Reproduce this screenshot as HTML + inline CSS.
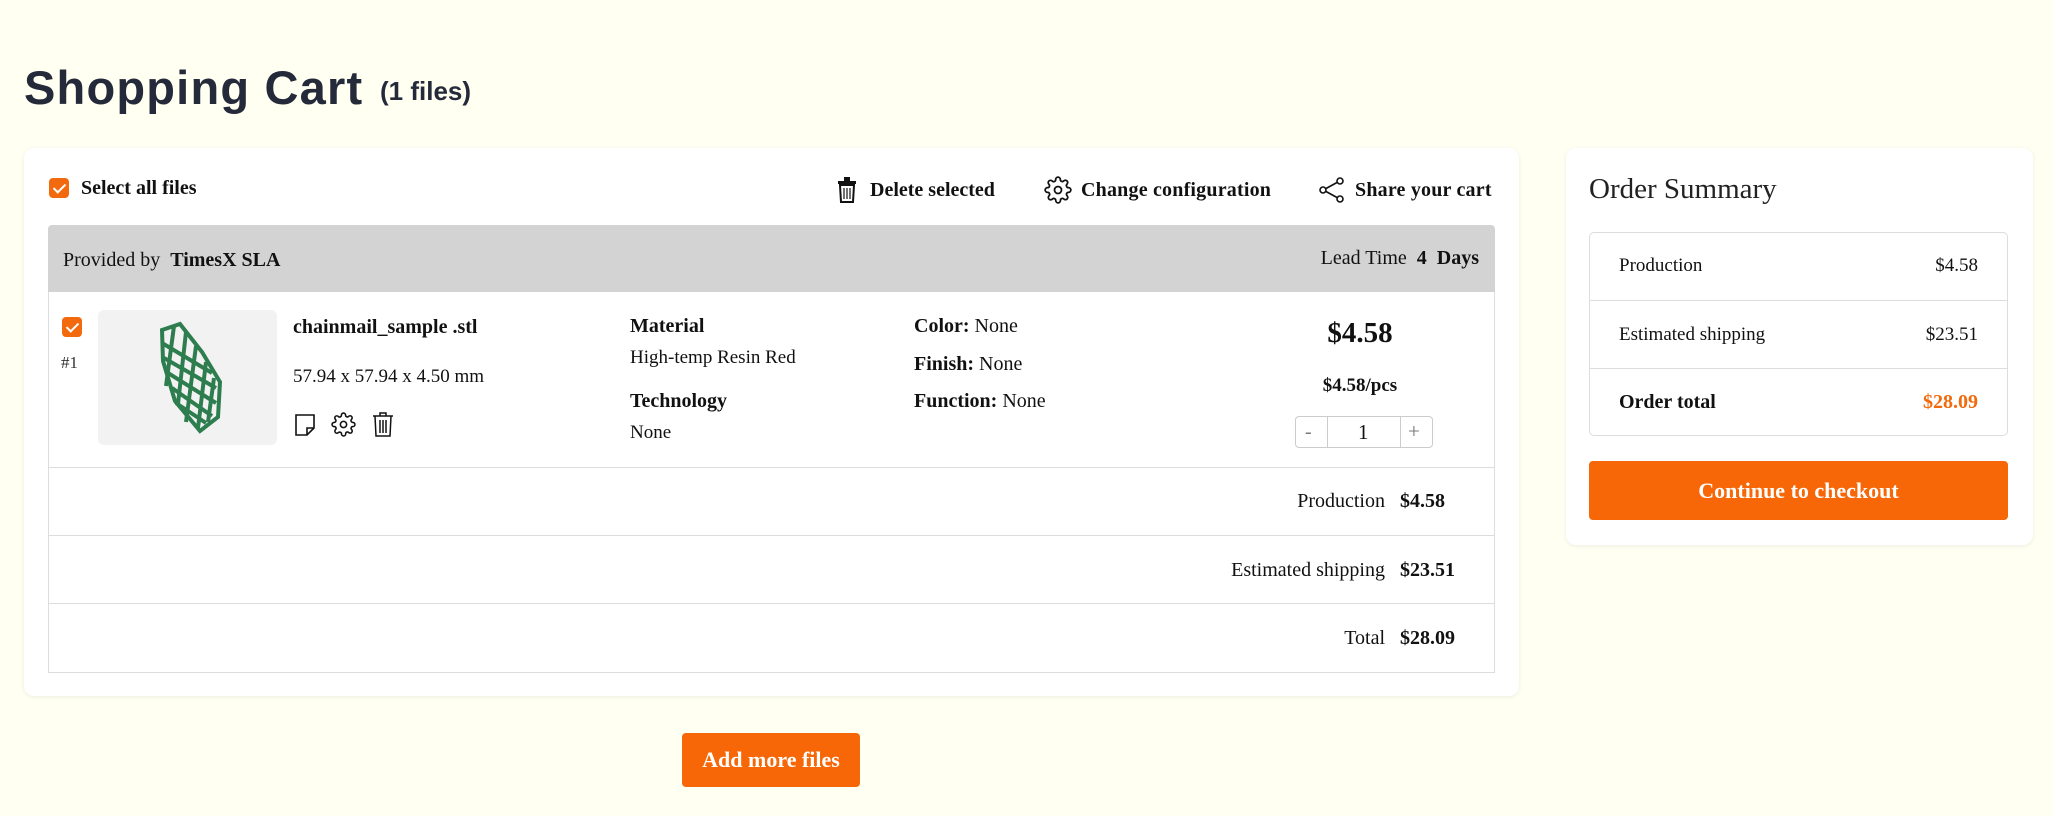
<!DOCTYPE html>
<html><head><meta charset="utf-8"><style>
*{box-sizing:border-box;margin:0;padding:0}
body{width:2053px;height:816px;background:#fffff2;font-family:"Liberation Serif",serif;color:#111;position:relative;overflow:hidden}
.a{position:absolute;white-space:nowrap}
.b{font-weight:bold}
.card{position:absolute;background:#fff;border-radius:10px;box-shadow:0 1px 4px rgba(0,0,0,.08)}
.cb{position:absolute;width:20px;height:20px;background:#f26a0d;border-radius:4px}
.cb:after{content:"";position:absolute;left:7px;top:3px;width:5px;height:10px;border:solid #fff;border-width:0 2.5px 2.5px 0;transform:rotate(45deg)}
.f21{font-size:20px}
.line{position:absolute;height:1px;background:#ddd}
</style></head><body>
<div class="a" style="left:24px;top:60px;font-family:'Liberation Sans',sans-serif;font-weight:bold;font-size:47px;color:#252a3a;letter-spacing:1.2px">Shopping Cart</div>
<div class="a" style="left:380px;top:76px;font-family:'Liberation Sans',sans-serif;font-weight:bold;font-size:26px;color:#252a3a">(1 files)</div>

<div class="card" style="left:24px;top:148px;width:1495px;height:548px"></div>
<div class="cb" style="left:49px;top:178px"></div>
<div class="a b f21" style="left:81px;top:177px">Select all files</div>
<svg class="a" style="left:836px;top:176px" width="22" height="28" viewBox="0 0 22 28"><rect x="2" y="5" width="18" height="3" fill="#111"/><rect x="8" y="1" width="6" height="4" fill="#111"/><path d="M4 9h14l-1 17H5z" fill="none" stroke="#111" stroke-width="2"/><path d="M8 12v11M11 12v11M14 12v11" stroke="#111" stroke-width="1.2"/></svg>
<div class="a b f21" style="left:870px;top:179px">Delete selected</div>
<svg class="a" style="left:1044px;top:176px" width="28" height="28" viewBox="0 0 24 24" fill="none" stroke="#111" stroke-width="1.5"><circle cx="12" cy="12" r="3"/><path d="M19.4 15a1.65 1.65 0 0 0 .33 1.82l.06.06a2 2 0 1 1-2.830 2.83l-.06-.06a1.65 1.65 0 0 0-1.82-.33 1.65 1.65 0 0 0-1 1.51V21a2 2 0 0 1-4 0v-.09A1.65 1.65 0 0 0 9 19.4a1.65 1.65 0 0 0-1.82.33l-.06.06a2 2 0 1 1-2.83-2.83l.06-.06A1.65 1.65 0 0 0 4.68 15a1.65 1.65 0 0 0-1.51-1H3a2 2 0 0 1 0-4h.09A1.65 1.65 0 0 0 4.6 9a1.65 1.65 0 0 0-.33-1.82l-.06-.06a2 2 0 1 1 2.83-2.83l.06.06A1.65 1.65 0 0 0 9 4.68a1.65 1.65 0 0 0 1-1.51V3a2 2 0 0 1 4 0v.09a1.65 1.650 0 0 0 1 1.51 1.65 1.65 0 0 0 1.82-.33l.06-.06a2 2 0 1 1 2.83 2.83l-.06.06A1.65 1.65 0 0 0 19.4 9a1.65 1.65 0 0 0 1.51 1H21a2 2 0 0 1 0 4h-.09a1.65 1.65 0 0 0-1.51 1z"/></svg>
<div class="a b f21" style="left:1081px;top:179px;letter-spacing:0.2px">Change configuration</div>
<svg class="a" style="left:1318px;top:176px" width="28" height="28" viewBox="0 0 28 28" fill="none" stroke="#111" stroke-width="1.6"><circle cx="22" cy="5" r="3"/><circle cx="5" cy="14" r="3"/><circle cx="22" cy="23" r="3"/><path d="M8 12.5l11-6M8 15.5l11 6"/></svg>
<div class="a b f21" style="left:1355px;top:179px;letter-spacing:0.2px">Share your cart</div>

<div class="a" style="left:48px;top:292px;width:1447px;height:381px;border:1px solid #ddd;border-top:none"></div>
<div class="a" style="left:48px;top:225px;width:1447px;height:67px;background:#d3d3d3;border-radius:4px 4px 0 0"></div>
<div class="a f21" style="left:63px;top:249px">Provided by &nbsp;<b>TimesX SLA</b></div>
<div class="a f21" style="right:574px;top:247px">Lead Time &nbsp;<b>4 &nbsp;Days</b></div>

<div class="cb" style="left:62px;top:317px"></div>
<div class="a" style="left:61px;top:353px;font-size:17px;color:#333">#1</div>
<div class="a" style="left:98px;top:310px;width:179px;height:135px;background:#f2f2f2;border-radius:6px"></div>
<svg class="a" style="left:150px;top:318px" width="80" height="120" viewBox="0 0 80 120"><g fill="none" stroke="#2e7d4f" stroke-width="4"><path d="M12 12l18 -6 22 28 18 30 -2 35 -18 14 -25 -30 -12 -40z"/><path d="M12 25l50 30M14 40l52 30M18 55l48 30M22 70l40 28M26 85l30 20M24 8l-8 60M36 14l-8 72M46 28l-10 76M56 44l-8 66M64 60l-6 44"/></g></svg>
<div class="a b f21" style="left:293px;top:316px">chainmail_sample .stl</div>
<div class="a" style="left:293px;top:366px;font-size:19px">57.94 x 57.94 x 4.50 mm</div>
<svg class="a" style="left:294px;top:413px" width="22" height="24" viewBox="0 0 22 24" fill="none" stroke="#111" stroke-width="1.6"><path d="M2 2h18v13l-7 7H2z M13 22v-7h7"/></svg>
<svg class="a" style="left:331px;top:412px" width="25" height="25" viewBox="0 0 24 24" fill="none" stroke="#111" stroke-width="1.5"><circle cx="12" cy="12" r="3"/><path d="M19.4 15a1.65 1.65 0 0 0 .33 1.82l.06.06a2 2 0 1 1-2.83 2.83l-.06-.06a1.65 1.65 0 0 0-1.82-.33 1.65 1.65 0 0 0-1 1.51V21a2 2 0 0 1-4 0v-.09A1.65 1.65 0 0 0 9 19.4a1.65 1.65 0 0 0-1.82.33l-.06.06a2 2 0 1 1-2.83-2.83l.06-.06A1.65 1.65 0 0 0 4.68 15a1.65 1.65 0 0 0-1.51-1H3a2 2 0 0 1 0-4h.09A1.65 1.65 0 0 0 4.6 9a1.65 1.65 0 0 0-.33-1.82l-.06-.06a2 2 0 1 1 2.83-2.83l.06.06A1.65 1.65 0 0 0 9 4.68a1.65 1.65 0 0 0 1-1.51V3a2 2 0 0 1 4 0v.09a1.65 1.65 0 0 0 1 1.51 1.65 1.65 0 0 0 1.82-.33l.06-.06a2 2 0 1 1 2.83 2.83l-.06.06A1.65 1.65 0 0 0 19.4 9a1.65 1.65 0 0 0 1.51 1H21a2 2 0 0 1 0 4h-.09a1.65 1.65 0 0 0-1.51 1z"/></svg>
<svg class="a" style="left:372px;top:411px" width="22" height="27" viewBox="0 0 22 27" fill="none" stroke="#111" stroke-width="1.5"><path d="M1 5h20M8 5V2h6v3M3 5l1 20h14l1-20M8 9v13M11 9v13M14 9v13"/></svg>

<div class="a b f21" style="left:630px;top:315px">Material</div>
<div class="a" style="left:630px;top:347px;font-size:19px">High-temp Resin Red</div>
<div class="a b f21" style="left:630px;top:390px">Technology</div>
<div class="a" style="left:630px;top:422px;font-size:19px">None</div>
<div class="a f21" style="left:914px;top:315px"><b>Color:</b> None</div>
<div class="a f21" style="left:914px;top:353px"><b>Finish:</b> None</div>
<div class="a f21" style="left:914px;top:390px"><b>Function:</b> None</div>

<div class="a b" style="left:1310px;top:317px;width:100px;text-align:center;font-size:29px">$4.58</div>
<div class="a b" style="left:1300px;top:375px;width:120px;text-align:center;font-size:19px">$4.58/pcs</div>
<div class="a" style="left:1295px;top:416px;width:138px;height:32px;border:1px solid #ccc;border-radius:4px;background:#fff"></div>
<div class="a" style="left:1327px;top:417px;width:1px;height:30px;background:#ccc"></div>
<div class="a" style="left:1400px;top:417px;width:1px;height:30px;background:#ccc"></div>
<div class="a" style="left:1305px;top:421px;font-size:20px;color:#777">-</div>
<div class="a" style="left:1358px;top:420px;font-size:21px">1</div>
<div class="a" style="left:1408px;top:419px;font-size:21px;color:#777">+</div>

<div class="line" style="left:48px;top:467px;width:1447px"></div>
<div class="line" style="left:48px;top:535px;width:1447px"></div>
<div class="line" style="left:48px;top:603px;width:1447px"></div>
<div class="a f21" style="right:608px;top:490px">Production &nbsp;&nbsp;<b>$4.58</b></div>
<div class="a f21" style="right:598px;top:559px">Estimated shipping &nbsp;&nbsp;<b>$23.51</b></div>
<div class="a f21" style="right:598px;top:627px">Total &nbsp;&nbsp;<b>$28.09</b></div>

<div class="a b" style="left:682px;top:733px;width:178px;height:54px;background:#f76707;border-radius:4px;color:#fff;font-size:22px;text-align:center;line-height:54px">Add more files</div>

<div class="card" style="left:1566px;top:148px;width:467px;height:397px"></div>
<div class="a" style="left:1589px;top:173px;font-size:29px;color:#222">Order Summary</div>
<div class="a" style="left:1589px;top:232px;width:419px;height:204px;border:1px solid #ddd;border-radius:5px"></div>
<div class="line" style="left:1590px;top:300px;width:417px"></div>
<div class="line" style="left:1590px;top:368px;width:417px"></div>
<div class="a" style="left:1619px;top:255px;font-size:19px">Production</div>
<div class="a" style="right:75px;top:255px;font-size:19px">$4.58</div>
<div class="a" style="left:1619px;top:324px;font-size:19px">Estimated shipping</div>
<div class="a" style="right:75px;top:324px;font-size:19px">$23.51</div>
<div class="a b" style="left:1619px;top:391px;font-size:20px">Order total</div>
<div class="a b" style="right:75px;top:391px;font-size:20px;color:#f26a0d">$28.09</div>
<div class="a b" style="left:1589px;top:461px;width:419px;height:59px;background:#f76707;border-radius:4px;color:#fff;font-size:22px;text-align:center;line-height:59px">Continue to checkout</div>
</body></html>
